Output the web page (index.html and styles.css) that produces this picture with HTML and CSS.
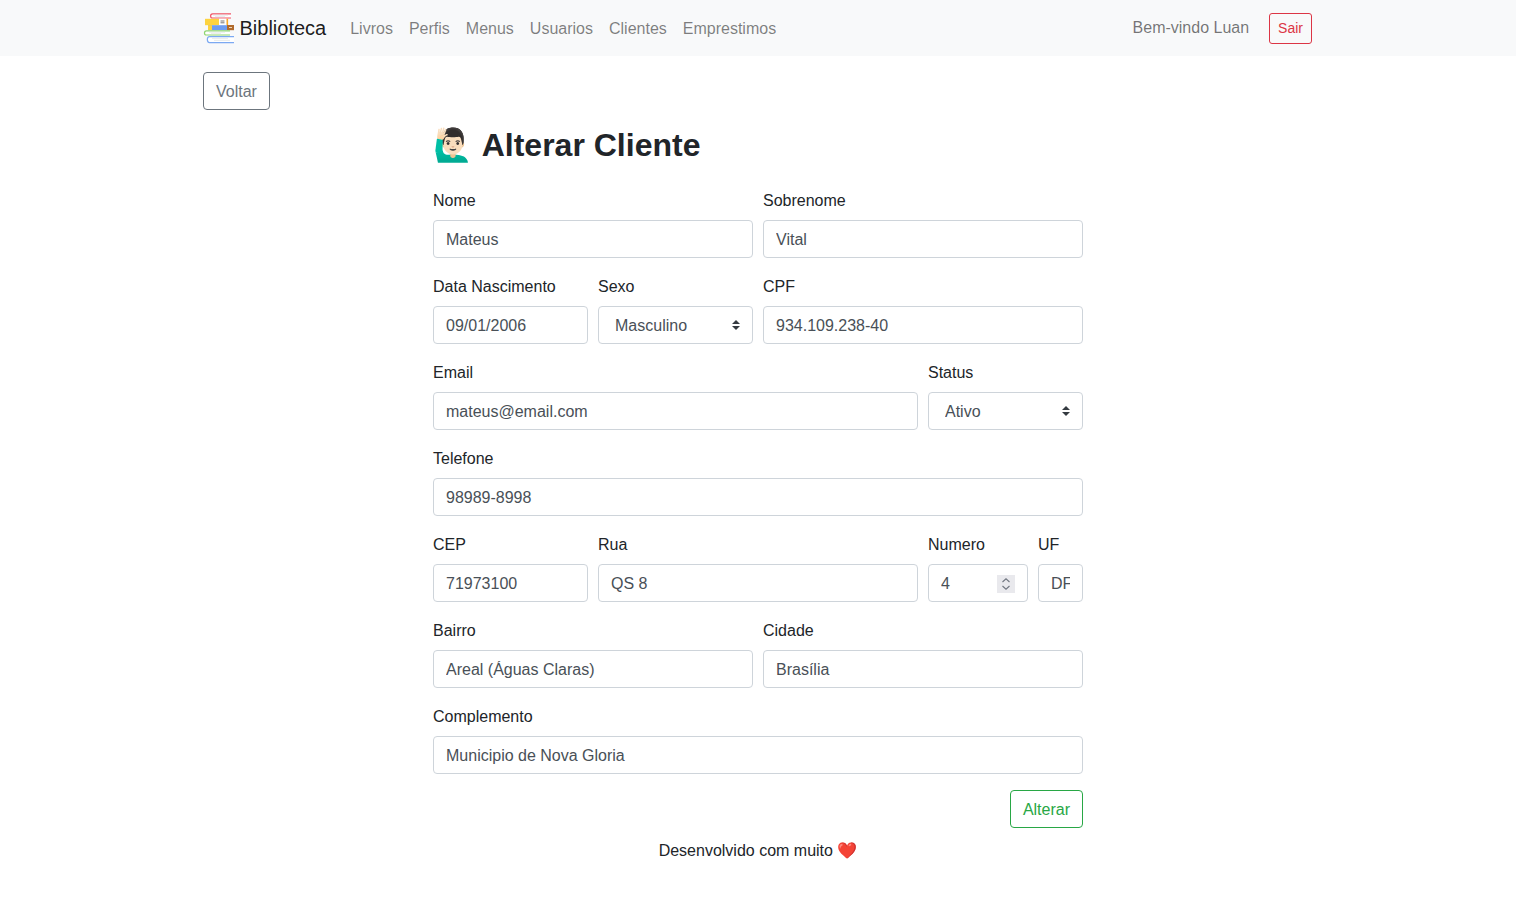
FILE: index.html
```html
<!DOCTYPE html>
<html lang="pt-BR">
<head>
    <meta charset="UTF-8">
    <title>Biblioteca - Alterar Cliente</title>
    <link rel="stylesheet" href="styles.css">
</head>
<body>
    <nav class="navbar">
        <div class="container navbar-inner">
            <a class="brand" href="#">
                <svg class="brand-logo" width="32" height="32" viewBox="0 0 32 32">
                    <path d="M28 1.8H9.5C7 1.8 7 6 9.5 6H28" fill="#fff" stroke="#ef5466" stroke-width="1.2"/>
                    <path d="M10 3.2h15M12 4.6h10" stroke="#dfe3e8" stroke-width=".8"/>
                    <rect x="2" y="6.8" width="14" height="6.4" fill="#fdd33f"/>
                    <rect x="16" y="6.8" width="7.5" height="6.4" fill="#fff"/>
                    <rect x="23.5" y="6.8" width="1.6" height="6.4" fill="#f7a826"/>
                    <path d="M17.5 9h4M17.5 10.8h4" stroke="#666" stroke-width=".9"/>
                    <rect x="5" y="13.2" width="19" height="5" fill="#6c9cf0"/>
                    <rect x="5" y="13.2" width="4" height="5" fill="#fdd33f"/>
                    <rect x="24" y="13" width="7" height="5.2" fill="#b06a2c"/>
                    <path d="M26 15.5h3" stroke="#f3e3cf" stroke-width=".9"/>
                    <path d="M27 18.8H3.5C.8 18.8.8 23 3.5 23H27" fill="#fff" stroke="#8fd672" stroke-width="1.2"/>
                    <path d="M6 20.3h16M8 21.6h10" stroke="#e3e8ea" stroke-width=".8"/>
                    <path d="M31 24.6H6.5C3.6 24.6 3.6 30.6 6.5 30.6H31" fill="#fff" stroke="#7ba9f2" stroke-width="1.2"/>
                    <path d="M9 26.4h16M11 28.4h16" stroke="#e3e8ea" stroke-width=".9"/>
                </svg>
                <span>Biblioteca</span>
            </a>
            <ul class="nav-links">
                <li><a href="#">Livros</a></li>
                <li><a href="#">Perfis</a></li>
                <li><a href="#">Menus</a></li>
                <li><a href="#">Usuarios</a></li>
                <li><a href="#">Clientes</a></li>
                <li><a href="#">Emprestimos</a></li>
            </ul>
            <span class="welcome">Bem-vindo Luan</span>
            <a class="btn btn-sm btn-danger" href="#">Sair</a>
        </div>
    </nav>

    <main class="container">
        <div class="back-row">
            <a class="btn btn-secondary" href="#">Voltar</a>
        </div>

        <form class="client-form">
            <h1 class="form-title"><span class="title-emoji">🙋🏻‍♂️</span> Alterar Cliente</h1>

            <div class="form-grid">
                <div class="field col-6">
                    <label for="nome">Nome</label>
                    <input id="nome" type="text" value="Mateus">
                </div>
                <div class="field col-6">
                    <label for="sobrenome">Sobrenome</label>
                    <input id="sobrenome" type="text" value="Vital">
                </div>

                <div class="field col-3">
                    <label for="nascimento">Data Nascimento</label>
                    <input id="nascimento" type="text" value="09/01/2006">
                </div>
                <div class="field col-3">
                    <label for="sexo">Sexo</label>
                    <select id="sexo">
                        <option>Masculino</option>
                        <option>Feminino</option>
                    </select>
                </div>
                <div class="field col-6">
                    <label for="cpf">CPF</label>
                    <input id="cpf" type="text" value="934.109.238-40">
                </div>

                <div class="field col-9">
                    <label for="email">Email</label>
                    <input id="email" type="text" value="mateus@email.com">
                </div>
                <div class="field col-3">
                    <label for="status">Status</label>
                    <select id="status">
                        <option>Ativo</option>
                        <option>Inativo</option>
                    </select>
                </div>

                <div class="field col-12">
                    <label for="telefone">Telefone</label>
                    <input id="telefone" type="text" value="98989-8998">
                </div>

                <div class="field col-3">
                    <label for="cep">CEP</label>
                    <input id="cep" type="text" value="71973100">
                </div>
                <div class="field col-6">
                    <label for="rua">Rua</label>
                    <input id="rua" type="text" value="QS 8">
                </div>
                <div class="field col-2">
                    <label for="numero">Numero</label>
                    <input id="numero" type="number" value="4">
                </div>
                <div class="field col-1">
                    <label for="uf">UF</label>
                    <input id="uf" type="text" value="DF">
                </div>

                <div class="field col-6">
                    <label for="bairro">Bairro</label>
                    <input id="bairro" type="text" value="Areal (Águas Claras)">
                </div>
                <div class="field col-6">
                    <label for="cidade">Cidade</label>
                    <input id="cidade" type="text" value="Brasília">
                </div>

                <div class="field col-12">
                    <label for="complemento">Complemento</label>
                    <input id="complemento" type="text" value="Municipio de Nova Gloria">
                </div>
            </div>

            <div class="form-actions">
                <button class="btn btn-success" type="button">Alterar</button>
            </div>

            <p class="footer-note">Desenvolvido com muito ❤️</p>
        </form>
    </main>
</body>
</html>
```

FILE: styles.css
```css
* {
    box-sizing: border-box;
}

body {
    margin: 0;
    font-family: "Liberation Sans", Arial, sans-serif;
    font-size: 16px;
    line-height: 1.5;
    color: #212529;
    background-color: #fff;
}

a {
    text-decoration: none;
}

.container {
    width: 1140px;
    margin: 0 auto;
    padding: 0 15px;
}

/* navbar */
.navbar {
    height: 56px;
    background-color: #f8f9fa;
}

.navbar-inner {
    display: flex;
    align-items: center;
    height: 56px;
}

.brand {
    display: flex;
    align-items: center;
    margin-right: 16px;
    font-size: 20px;
    color: rgba(0, 0, 0, .9);
}

.brand-logo {
    margin-right: 4.5px;
}

.nav-links {
    display: flex;
    flex: 1;
    margin: 0;
    padding: 0;
    list-style: none;
}

.nav-links a {
    display: block;
    padding: 9px 8px 7px;
    color: rgba(0, 0, 0, .5);
}

.welcome {
    margin-right: 20px;
    color: rgba(0, 0, 0, .55);
}

/* buttons */
.btn {
    display: inline-block;
    padding: 7px 12px 5px;
    border: 1px solid transparent;
    border-radius: 4px;
    background: transparent;
    font-family: inherit;
    font-size: 16px;
    line-height: 1.5;
    cursor: pointer;
}

.btn-sm {
    padding: 4px 8px;
    font-size: 14px;
    border-radius: 3px;
}

.btn-danger {
    margin-right: 1px;
    color: #dc3545;
    border-color: #dc3545;
}

.btn-secondary {
    color: #6c757d;
    border-color: #6c757d;
}

.btn-success {
    color: #28a745;
    border-color: #28a745;
}

/* form */
.back-row {
    padding-top: 16px;
}

.client-form {
    width: 650px;
    margin: 0 auto;
}

.form-title {
    margin: 11px 0 19px;
    font-size: 32px;
    font-weight: 700;
    line-height: 1.5;
}

.title-emoji {
    margin-right: 1px;
}

.form-grid {
    display: grid;
    grid-template-columns: repeat(12, 1fr);
    column-gap: 10px;
    row-gap: 16px;
}

.col-1 { grid-column: span 1; }
.col-2 { grid-column: span 2; }
.col-3 { grid-column: span 3; }
.col-6 { grid-column: span 6; }
.col-9 { grid-column: span 9; }
.col-12 { grid-column: span 12; }

.field {
    min-width: 0;
}

.field label {
    display: block;
    padding-top: 1px;
    margin-bottom: 7px;
}

.field input,
.field select {
    display: block;
    width: 100%;
    height: 38px;
    padding: 7px 12px 5px;
    border: 1px solid #ced4da;
    border-radius: 4px;
    background-color: #fff;
    font-family: inherit;
    font-size: 16px;
    line-height: 1.5;
    color: #495057;
}

.field select {
    padding-left: 16px;
    padding-right: 28px;
    appearance: none;
    background: #fff url("data:image/svg+xml,%3csvg xmlns='http://www.w3.org/2000/svg' viewBox='0 0 4 5'%3e%3cpath fill='%23343a40' d='M2 0L0 2h4zm0 5L0 3h4z'/%3e%3c/svg%3e") no-repeat right 12px center / 8px 10px;
}

.field input[type="number"]::-webkit-inner-spin-button {
    appearance: none;
    opacity: 1;
    width: 18px;
    height: 18px;
    margin-top: 0;
    background: #e9e9ed url("data:image/svg+xml,%3csvg xmlns='http://www.w3.org/2000/svg' viewBox='0 0 18 18'%3e%3cpath fill='none' stroke='%23707680' stroke-width='1.1' d='M5.5 7L9 3.8 12.5 7M5.5 11L9 14.2 12.5 11'/%3e%3c/svg%3e") no-repeat center;
}

.form-actions {
    display: flex;
    justify-content: flex-end;
    margin-top: 16px;
}

.footer-note {
    margin: 11px 0 0;
    text-align: center;
}
```
